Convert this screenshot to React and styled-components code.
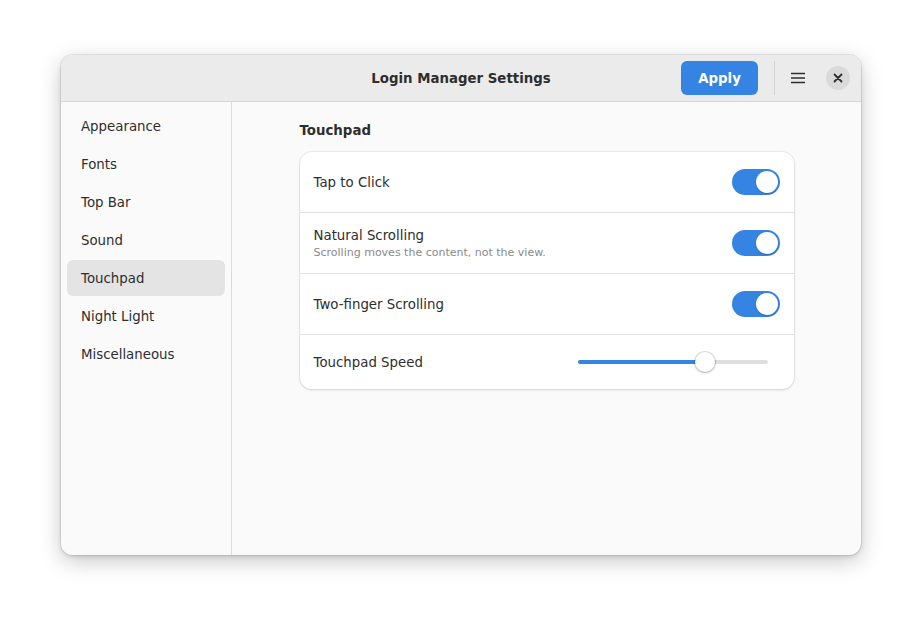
import styled, { createGlobalStyle } from 'styled-components';

const GlobalStyle = createGlobalStyle`
  html, body {
    margin: 0;
    padding: 0;
    background: #ffffff;
  }
  * {
    box-sizing: border-box;
  }
`;

const navItems = [
  'Appearance',
  'Fonts',
  'Top Bar',
  'Sound',
  'Touchpad',
  'Night Light',
  'Miscellaneous',
];

const toggles = [
  { label: 'Tap to Click' },
  {
    label: 'Natural Scrolling',
    sub: 'Scrolling moves the content, not the view.',
  },
  { label: 'Two-finger Scrolling' },
];

const App = () => {
  const speed = 0.67;

  return (
    <Page>
      <GlobalStyle />
      <Window>
        <HeaderBar>
          <span />
          <Title>Login Manager Settings</Title>
          <HeaderEnd>
            <ApplyButton>Apply</ApplyButton>
            <Separator />
            <IconButton aria-label="Menu">
              <svg width="16" height="16" viewBox="0 0 16 16">
                <path
                  d="M1 3.5h14M1 8h14M1 12.5h14"
                  stroke="#2e2e2e"
                  strokeWidth="1.6"
                  fill="none"
                />
              </svg>
            </IconButton>
            <CloseButton aria-label="Close">
              <svg width="10" height="10" viewBox="0 0 10 10">
                <path
                  d="M1.5 1.5l7 7M8.5 1.5l-7 7"
                  stroke="#2e2e2e"
                  strokeWidth="1.8"
                  strokeLinecap="round"
                />
              </svg>
            </CloseButton>
          </HeaderEnd>
        </HeaderBar>

        <Body>
          <Sidebar>
            {navItems.map((item) => (
              <NavItem key={item} selected={item === 'Touchpad'}>
                {item}
              </NavItem>
            ))}
          </Sidebar>

          <Content>
            <Group>
              <GroupTitle>Touchpad</GroupTitle>
              <Card>
                {toggles.map((t) => (
                  <Row key={t.label}>
                    <Labels>
                      <RowLabel>{t.label}</RowLabel>
                      {t.sub && <RowSub>{t.sub}</RowSub>}
                    </Labels>
                    <Switch>
                      <Knob />
                    </Switch>
                  </Row>
                ))}
                <Row short>
                  <RowLabel>Touchpad Speed</RowLabel>
                  <Slider>
                    <SliderFill style={{ width: `${speed * 100}%` }} />
                    <SliderKnob style={{ left: `${speed * 100}%` }} />
                  </Slider>
                </Row>
              </Card>
            </Group>
          </Content>
        </Body>
      </Window>
    </Page>
  );
};

const Page = styled.div`
  width: 922px;
  height: 622px;
  padding: 55px 61px 0;
  font-family: 'DejaVu Sans', 'Noto Sans', sans-serif;
  color: #2e2e2e;
`;

const Window = styled.div`
  width: 800px;
  height: 500px;
  border-radius: 12px;
  overflow: hidden;
  display: flex;
  flex-direction: column;
  background: #fafafa;
  box-shadow: 0 0 0 1px rgba(0, 0, 0, 0.08), 0 6px 22px rgba(0, 0, 0, 0.22),
    0 2px 4px rgba(0, 0, 0, 0.1);
`;

const HeaderBar = styled.div`
  height: 47px;
  flex: none;
  display: grid;
  grid-template-columns: 1fr auto 1fr;
  align-items: center;
  background: #ebebeb;
  border-bottom: 1px solid #d6d6d6;
  padding: 0 11px;
`;

const Title = styled.div`
  font-size: 13.33px;
  font-weight: bold;
  color: #2e2e2e;
`;

const HeaderEnd = styled.div`
  display: flex;
  align-items: center;
  justify-content: flex-end;
`;

const ApplyButton = styled.button`
  width: 77px;
  height: 34px;
  border: none;
  border-radius: 6px;
  background: #3584e4;
  color: #ffffff;
  font-family: inherit;
  font-size: 13.33px;
  font-weight: bold;
  padding: 0;
`;

const Separator = styled.div`
  width: 1px;
  height: 34px;
  background: #d3d3d3;
  margin: 0 6px 0 16px;
`;

const IconButton = styled.button`
  width: 34px;
  height: 34px;
  border: none;
  border-radius: 6px;
  background: transparent;
  display: flex;
  align-items: center;
  justify-content: center;
  padding: 0;
`;

const CloseButton = styled.button`
  width: 24px;
  height: 24px;
  margin-left: 11px;
  border: none;
  border-radius: 50%;
  background: #dadada;
  display: flex;
  align-items: center;
  justify-content: center;
  padding: 0;
`;

const Body = styled.div`
  flex: 1;
  display: flex;
  min-height: 0;
`;

const Sidebar = styled.nav`
  width: 171px;
  flex: none;
  border-right: 1px solid #dcdcdc;
  background: #fafafa;
  padding: 6px;
  display: flex;
  flex-direction: column;
  gap: 2px;
`;

const NavItem = styled.div`
  height: 36px;
  display: flex;
  align-items: center;
  padding-left: 14px;
  border-radius: 6px;
  font-size: 13.33px;
  color: #2e2e2e;
  background: ${(props) => (props.selected ? '#e4e4e4' : 'transparent')};
`;

const Content = styled.main`
  flex: 1;
  display: flex;
  justify-content: center;
  padding-top: 20px;
`;

const Group = styled.section`
  width: 494px;
`;

const GroupTitle = styled.h2`
  margin: 0 0 13px;
  font-size: 13.33px;
  font-weight: bold;
  line-height: 17px;
  color: #2e2e2e;
`;

const Card = styled.div`
  background: #ffffff;
  border-radius: 12px;
  box-shadow: 0 0 0 1px rgba(0, 0, 0, 0.05), 0 1px 3px rgba(0, 0, 0, 0.12);
  overflow: hidden;
`;

const Row = styled.div`
  box-sizing: content-box;
  height: ${(props) => (props.short ? '54px' : '60px')};
  display: flex;
  align-items: center;
  justify-content: space-between;
  padding: 0 14px;

  &:not(:first-child) {
    border-top: 1px solid #e2e2e2;
  }
`;

const Labels = styled.div`
  display: flex;
  flex-direction: column;
  gap: 3px;
`;

const RowLabel = styled.div`
  font-size: 13.33px;
  color: #2e2e2e;
`;

const RowSub = styled.div`
  font-size: 11px;
  color: #8a8a8a;
`;

const Switch = styled.div`
  width: 48px;
  height: 26px;
  border-radius: 13px;
  background: #3584e4;
  display: flex;
  align-items: center;
  justify-content: flex-end;
  padding: 0 2px;
`;

const Knob = styled.div`
  width: 22px;
  height: 22px;
  border-radius: 50%;
  background: #ffffff;
  box-shadow: 0 1px 2px rgba(0, 0, 0, 0.2);
`;

const Slider = styled.div`
  position: relative;
  width: 190px;
  height: 4px;
  margin-right: 12px;
  border-radius: 2px;
  background: #dedede;
`;

const SliderFill = styled.div`
  height: 100%;
  border-radius: 2px;
  background: #3584e4;
`;

const SliderKnob = styled.div`
  position: absolute;
  top: 50%;
  width: 20px;
  height: 20px;
  margin: -10px 0 0 -10px;
  border-radius: 50%;
  background: #ffffff;
  box-shadow: 0 0 0 1px rgba(0, 0, 0, 0.12), 0 1px 3px rgba(0, 0, 0, 0.2);
`;

export default App;
